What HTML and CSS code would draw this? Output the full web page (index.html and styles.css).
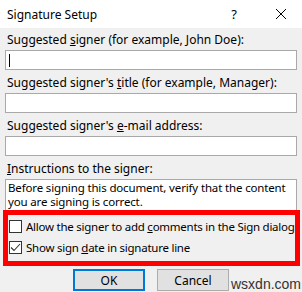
FILE: index.html
```html
<!DOCTYPE html>
<html lang="en">
<head>
    <meta charset="UTF-8">
    <title>Signature Setup</title>
    <link rel="stylesheet" href="styles.css">
</head>
<body>
    <div class="dialog">
        <div class="titlebar">
            <span class="title">Signature Setup</span>
            <span class="help">?</span>
            <svg class="close" width="12" height="12" viewBox="0 0 12 12">
                <path d="M1 1 L11 11 M11 1 L1 11" stroke="#000" stroke-width="1" fill="none"/>
            </svg>
        </div>
        <div class="content">
            <div class="field">
                <label>Suggested <u>s</u>igner (for example, John Doe):</label>
                <div class="textbox"><span class="caret"></span></div>
            </div>
            <div class="field">
                <label>Suggested signer's <u>t</u>itle (for example, Manager):</label>
                <div class="textbox"></div>
            </div>
            <div class="field">
                <label>Suggested signer's <u>e</u>-mail address:</label>
                <div class="textbox"></div>
            </div>
            <div class="field">
                <label><u>I</u>nstructions to the signer:</label>
                <div class="textarea">Before signing this document, verify that the content you are signing is correct.</div>
            </div>
        </div>
        <div class="highlight">
            <div class="check-row">
                <span class="checkbox"></span>
                <span class="check-label">Allow the signer to add <u>c</u>omments in the Sign dialog</span>
            </div>
            <div class="check-row">
                <span class="checkbox">
                    <svg width="11" height="11" viewBox="0 0 11 11">
                        <path d="M1 5.5 L4 8.5 L10 2" stroke="#333" stroke-width="1.1" fill="none"/>
                    </svg>
                </span>
                <span class="check-label">Show sign <u>d</u>ate in signature line</span>
            </div>
        </div>
        <div class="buttons">
            <button class="btn default">OK</button>
            <button class="btn">Cancel</button>
            <span class="watermark">wsxdn.com</span>
        </div>
    </div>
</body>
</html>
```

FILE: styles.css
```css
body {
    margin: 0;
    padding: 0;
    background-color: #f0f0f0;
    font-family: "Noto Sans", "Open Sans", sans-serif;
    font-size: 12px;
    color: #000;
}
.dialog {
    width: 302px;
    height: 292px;
    overflow: hidden;
    background: #f0f0f0;
}
.titlebar {
    height: 28px;
    background: #fff;
    display: flex;
    align-items: center;
    padding-left: 7px;
}
.title {
    flex-grow: 1;
    font-size: 12px;
}
.help {
    font-size: 13px;
    margin-right: 38px;
}
.close {
    margin-right: 15px;
}
.content {
    padding: 4px 5px 0 5px;
}
.field label {
    display: block;
    height: 16px;
    line-height: 16px;
    margin: 0 0 2px 2px;
    white-space: nowrap;
}
.textbox {
    height: 18px;
    border: 1px solid #a9a9a9;
    background: #fff;
    margin-bottom: 5px;
    position: relative;
}
.caret {
    position: absolute;
    left: 3px;
    top: 3px;
    width: 1px;
    height: 13px;
    background: #000;
}
.textarea {
    height: 28px;
    border: 1px solid #a9a9a9;
    border-bottom: none;
    background: #fff;
    padding: 1px 0 1px 2px;
    font-size: 11.5px;
    line-height: 14px;
    letter-spacing: -0.15px;
}
.highlight {
    margin: 0 2px 0 3px;
    border: 5px solid #ff0000;
    padding: 2px 0 5px 0;
}
.check-row {
    display: flex;
    align-items: center;
    height: 18px;
}
.check-row + .check-row {
    margin-top: 3px;
}
.check-label {
    white-space: nowrap;
    font-size: 11.5px;
    letter-spacing: -0.25px;
}
.checkbox {
    flex-shrink: 0;
    width: 11px;
    height: 11px;
    border: 1px solid #333;
    background: #fff;
    margin: 0 4px 0 1px;
    display: flex;
    align-items: center;
    justify-content: center;
}
.buttons {
    display: flex;
    align-items: center;
    padding: 2px 0 0 73px;
}
.btn {
    font-family: inherit;
    font-size: 12px;
    width: 72px;
    height: 22px;
    margin-right: 12px;
    background: #e1e1e1;
    border: 1px solid #adadad;
    padding: 0;
    color: #000;
}
.btn.default {
    border: 2px solid #0078d7;
}
.watermark {
    font-family: "Liberation Sans", Arial, sans-serif;
    font-size: 14px;
    line-height: 16px;
    color: #333;
    margin-left: -10px;
    margin-top: 8px;
}
```
